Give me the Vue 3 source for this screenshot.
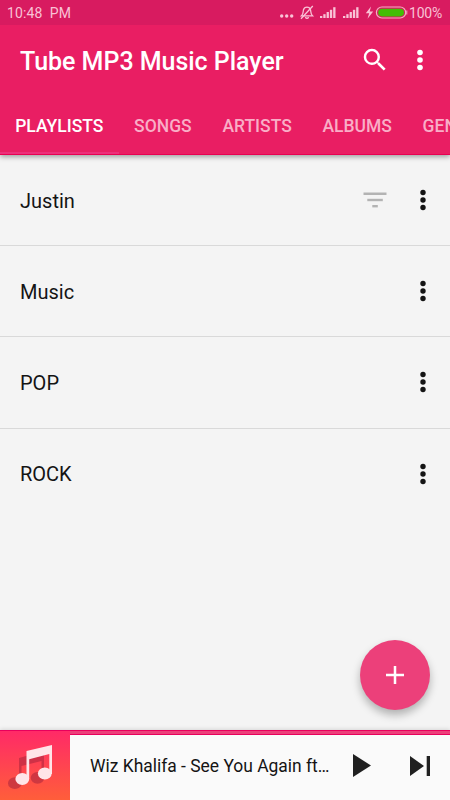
<template>
  <div class="screen">
    <header class="header">
      <div class="status-bar">
        <span class="time">10:48&nbsp; PM</span>
        <div class="status-icons">
          <svg class="status-svg" width="129" height="25" viewBox="0 0 129 25">
            <g fill="#f9c2d6">
              <circle cx="2.7" cy="16" r="1.7" />
              <circle cx="7.7" cy="16" r="1.7" />
              <circle cx="12.7" cy="16" r="1.7" />
            </g>
            <g fill="none" stroke="#f9c2d6" stroke-width="1.3">
              <path d="M22.5 15.8 C24.5 14 24 11.5 24.5 9.8 C25.5 6.1 30.5 6.1 31.5 9.8 C32 11.5 31.5 14 33.5 15.8 Z" />
              <path d="M26.5 17 C27 18.9 29 18.9 29.5 17" />
              <path d="M33.8 6 L22 18.8" />
            </g>
            <g v-for="x in [41, 64]" :key="x" fill="#f9c2d6">
              <rect :x="x" y="16" width="2.3" height="2" />
              <rect :x="x + 3.3" y="14.2" width="2.3" height="3.8" />
              <rect :x="x + 6.6" y="12" width="2.3" height="6" />
              <rect :x="x + 9.9" y="9.8" width="2.3" height="8.2" />
              <rect :x="x + 13.2" y="7.2" width="2.3" height="10.8" />
            </g>
            <path d="M92 6.5 L86.8 13.2 H90.2 L88.5 18.8 L94.2 11.6 H90.7 Z" fill="#f9c2d6" />
            <rect x="97.4" y="7" width="29.3" height="11" rx="5.5" fill="none" stroke="#f3b0c2" stroke-width="1.2" />
            <path d="M127.8 10.5 V14.5" stroke="#f3b0c2" stroke-width="1" />
            <rect x="99.2" y="8.8" width="25.8" height="7.6" rx="3.8" fill="#43bd05" />
          </svg>
          <span class="percent">100%</span>
        </div>
      </div>
      <div class="toolbar">
        <h1 class="title">Tube MP3 Music Player</h1>
        <svg class="search" width="30" height="30" viewBox="0 0 24 24">
          <path
            fill="#fff"
            d="M15.5 14h-.79l-.28-.27A6.47 6.47 0 0 0 16 9.5 6.5 6.5 0 1 0 9.5 16c1.61 0 3.09-.59 4.23-1.57l.27.28v.79l5 4.99L20.49 19l-4.99-5zm-6 0C7.01 14 5 11.99 5 9.5S7.01 5 9.5 5 14 7.01 14 9.5 11.99 14 9.5 14z"
          />
        </svg>
        <svg class="more" width="6" height="22" viewBox="0 0 6 22" fill="#fff">
          <circle v-for="y in [3.5, 11, 18.5]" :key="y" cx="3" :cy="y" r="2.8" />
        </svg>
      </div>
      <nav class="tabs">
        <div v-for="tab in tabs" :key="tab" :class="['tab', { active: tab === activeTab }]" @click="activeTab = tab">
          {{ tab }}
        </div>
      </nav>
    </header>

    <main class="list">
      <div v-for="playlist in playlists" :key="playlist.name" class="row">
        <span class="name">{{ playlist.name }}</span>
        <svg v-if="playlist.sortable" class="sort" width="24" height="18" viewBox="0 0 24 18" fill="#b3b3b3">
          <rect x="0.5" y="1.5" width="23" height="2.5" />
          <rect x="4.3" y="7.8" width="15.5" height="2.4" />
          <rect x="9.3" y="14" width="5.5" height="2.4" />
        </svg>
        <svg class="more" width="6" height="22" viewBox="0 0 6 22" fill="#141414">
          <circle v-for="y in [3.5, 11, 18.5]" :key="y" cx="3" :cy="y" r="2.7" />
        </svg>
      </div>
    </main>

    <button class="fab">
      <svg width="18" height="18" viewBox="0 0 18 18">
        <path d="M9 0 V18 M0 9 H18" stroke="#fff" stroke-width="2.5" />
      </svg>
    </button>

    <footer class="player">
      <svg class="art" width="70" height="70" viewBox="0 0 70 70">
        <defs>
          <linearGradient id="cover" x1="0" y1="0" x2="0" y2="1">
            <stop offset="0" stop-color="#ff2968" />
            <stop offset="1" stop-color="#ff5e3a" />
          </linearGradient>
        </defs>
        <rect width="70" height="70" fill="url(#cover)" />
        <rect width="70" height="1" fill="#e8005c" />
        <g fill="#a8243d" fill-opacity="0.55">
          <path d="M19 28 L44 21 V47 H41.5 V31 L21.5 36 V52 H19 Z" />
          <ellipse cx="14.8" cy="53.2" rx="6.8" ry="5.9" />
          <ellipse cx="37.5" cy="47.8" rx="6.8" ry="5.9" />
        </g>
        <g fill="#ffe5e8">
          <path d="M26.5 21 L52 15 V44 H49.3 V24 L29.2 29.2 V49 H26.5 Z" />
          <ellipse cx="22.3" cy="49" rx="6.9" ry="6" />
          <ellipse cx="44.8" cy="43.6" rx="6.9" ry="6" />
        </g>
      </svg>
      <div class="now-playing">
        <div class="progress"></div>
        <div class="controls">
          <span class="song">Wiz Khalifa - See You Again ft. Charlie Puth</span>
          <svg class="play" width="18" height="23" viewBox="0 0 18 23">
            <path d="M0 0 L18 11.5 L0 23 Z" fill="#202020" />
          </svg>
          <svg class="next" width="20" height="20" viewBox="0 0 20 20" fill="#202020">
            <path d="M0 0 L14 10 L0 20 Z" />
            <rect x="16.7" width="3.3" height="20" />
          </svg>
        </div>
      </div>
    </footer>
  </div>
</template>

<script setup>
import { ref } from 'vue';

const tabs = ['PLAYLISTS', 'SONGS', 'ARTISTS', 'ALBUMS', 'GENRES'];
const activeTab = ref('PLAYLISTS');

const playlists = [
  { name: 'Justin', sortable: true },
  { name: 'Music' },
  { name: 'POP' },
  { name: 'ROCK' }
];
</script>

<style>
body {
  margin: 0;
  overflow: hidden;
}
</style>

<style scoped>
.screen {
  position: relative;
  display: flex;
  flex-direction: column;
  width: 450px;
  height: 800px;
  overflow: hidden;
  background: #f4f4f4;
  font-family: Roboto, "Liberation Sans", sans-serif;
}

.header {
  position: relative;
  z-index: 1;
  height: 155px;
  box-sizing: border-box;
  background: #e91e63;
  border-bottom: 1px solid #e80052;
  box-shadow: 0 2px 5px rgba(0, 0, 0, 0.35);
}

.status-bar {
  display: flex;
  justify-content: space-between;
  height: 25px;
  padding: 0 8px 0 7px;
  background: #d81b60;
  color: #f9c2d6;
  font-size: 14px;
  line-height: 26px;
}

.time {
  letter-spacing: 0.15px;
}

.status-icons {
  display: flex;
}

.status-svg {
  margin-right: 1px;
}

.percent {
  width: 33px;
  font-size: 14px;
  letter-spacing: -0.2px;
}

.toolbar {
  display: flex;
  align-items: center;
  height: 72px;
  padding: 0 27px 0 20px;
}

.title {
  flex: 1;
  margin: 0;
  color: #fff;
  font-size: 25px;
  font-weight: 500;
  letter-spacing: -0.03px;
  white-space: nowrap;
}

.search {
  margin: -3px 27px 0 0;
}

.toolbar .more {
  margin-top: -2px;
}

.tabs {
  display: flex;
  height: 57px;
  overflow: hidden;
}

.tab {
  flex: none;
  box-sizing: border-box;
  height: 57px;
  padding: 0 15.5px 0 15.2px;
  border-bottom: 2px solid transparent;
  color: #f9aec7;
  font-size: 17.5px;
  font-weight: 500;
  line-height: 59px;
}

.tab.active {
  border-bottom-color: #ec307a;
  color: #fff;
}

.list {
  flex: 1;
}

.row {
  display: flex;
  align-items: center;
  box-sizing: border-box;
  height: 91.2px;
  padding: 0 24.5px 0 20px;
  border-bottom: 1px solid #d9d9d9;
}

.row:last-child {
  border-bottom-color: transparent;
}

.name {
  flex: 1;
  padding-top: 1px;
  color: #141414;
  font-size: 20px;
}

.sort {
  margin-right: 32.5px;
}

.fab {
  position: absolute;
  top: 640px;
  left: 360px;
  display: flex;
  align-items: center;
  justify-content: center;
  width: 70px;
  height: 70px;
  padding: 0;
  border: none;
  border-radius: 50%;
  background: #ec407a;
  box-shadow: 0 5px 9px rgba(0, 0, 0, 0.28);
}

.player {
  display: flex;
  height: 70px;
  background: #fafafa;
  box-shadow: 0 -1px 4px rgba(0, 0, 0, 0.12);
}

.art {
  flex: none;
}

.now-playing {
  flex: 1;
  min-width: 0;
}

.progress {
  box-sizing: border-box;
  height: 5px;
  border-top: 1px solid #e8005c;
  border-bottom: 1px solid #e8005c;
  background: #ec407a;
}

.controls {
  display: flex;
  align-items: center;
  height: 61px;
  padding: 0 20px;
}

.song {
  width: 243px;
  overflow: hidden;
  color: #141414;
  font-size: 17.45px;
  text-overflow: ellipsis;
  white-space: nowrap;
}

.play {
  margin: -1px 39px 0 20px;
}
</style>
